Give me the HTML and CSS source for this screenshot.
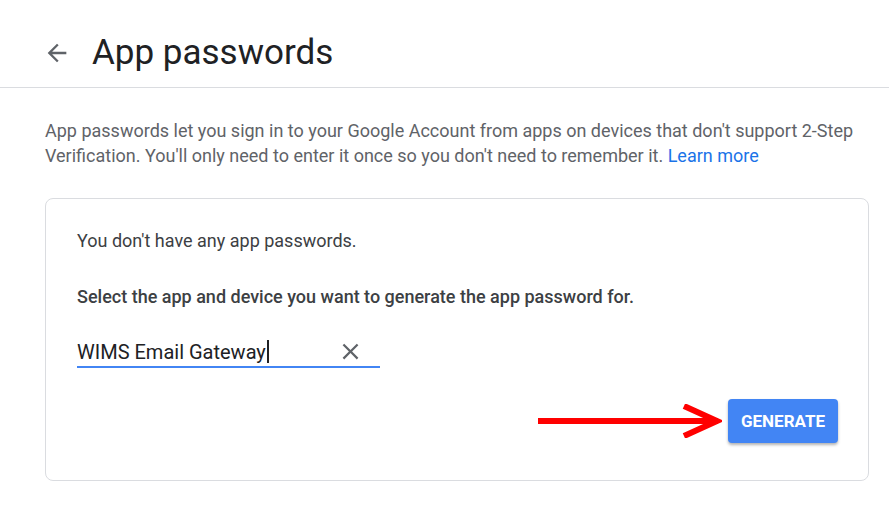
FILE: index.html
```html
<!DOCTYPE html>
<html>
<head>
    <title>App passwords</title>
    <link rel="stylesheet" href="styles.css">
</head>
<body>
    <!-- Page header -->
    <header class="page-header">
        <a class="back-link" href="#">
            <svg viewBox="0 0 24 24" width="28" height="28"><path d="M20 11H7.83l5.59-5.59L12 4l-8 8 8 8 1.41-1.41L7.83 13H20v-2z"/></svg>
        </a>
        <h1 class="page-title">App passwords</h1>
    </header>

    <main class="content">
        <p class="intro">
            <span>App passwords let you sign in to your Google Account from apps on devices that don't support 2-Step
            Verification. You'll only need to enter it once so you don't need to remember it.</span>
            <a class="learn-more" href="#">Learn more</a>
        </p>

        <!-- Generate card -->
        <section class="card">
            <p class="empty-note">You don't have any app passwords.</p>
            <p class="select-label">Select the app and device you want to generate the app password for.</p>

            <div class="field">
                <span class="field-value">WIMS Email Gateway<span class="caret"></span></span>
                <svg class="clear-icon" viewBox="0 0 24 24" width="27" height="27"><path d="M19 6.41L17.59 5 12 10.59 6.41 5 5 6.41 10.59 12 5 17.59 6.41 19 12 13.41 17.59 19 19 17.59 13.41 12z"/></svg>
            </div>

            <div class="actions">
                <svg class="pointer-arrow" viewBox="0 0 184 34" width="184" height="34">
                    <line x1="0" y1="17" x2="178" y2="17" stroke="#ff0000" stroke-width="6"/>
                    <polyline points="146,2 179,17 146,32" fill="none" stroke="#ff0000" stroke-width="6"/>
                </svg>
                <button class="generate-btn">GENERATE</button>
            </div>
        </section>
    </main>
</body>
</html>
```

FILE: styles.css
```css
body {
    font-family: Roboto, Arial, sans-serif;
    background-color: #fff;
    margin: 0;
    color: #3c4043;
}

.page-header {
    display: flex;
    align-items: center;
    height: 69px;
    padding-top: 18px;
    border-bottom: 1px solid #dadce0;
    padding-left: 43px;
    box-sizing: content-box;
}

.back-link {
    display: flex;
    fill: #5f6368;
    margin-right: 21px;
}

.page-title {
    margin: 0;
    font-size: 35px;
    font-weight: 400;
    color: #202124;
}

.content {
    width: 824px;
    margin-left: 45px;
    padding-top: 30px;
}

.intro {
    margin: 0 0 30px 0;
    font-size: 18px;
    line-height: 25px;
    color: #5f6368;
}

.learn-more {
    color: #1a73e8;
    text-decoration: none;
}

.card {
    border: 1px solid #dadce0;
    border-radius: 8px;
    padding: 30px 30px 37px 31px;
}

.empty-note {
    margin: 0 0 32px 0;
    font-size: 18px;
    line-height: 24px;
}

.select-label {
    margin: 0 0 29px 0;
    font-size: 18px;
    line-height: 24px;
    font-weight: 500;
}

.field {
    display: flex;
    align-items: center;
    justify-content: space-between;
    width: 303px;
    border-bottom: 2px solid #4285f4;
    padding-bottom: 1px;
}

.field-value {
    font-size: 20px;
    color: #202124;
    display: flex;
    align-items: center;
}

.caret {
    display: inline-block;
    width: 2px;
    height: 23px;
    background-color: #202124;
    margin-left: 1px;
}

.clear-icon {
    fill: #5f6368;
    margin-right: 16px;
}

.actions {
    display: flex;
    justify-content: flex-end;
    align-items: center;
    gap: 6px;
    margin-top: 31px;
}

.generate-btn {
    width: 110px;
    height: 44px;
    background-color: #4285f4;
    color: #fff;
    border: none;
    border-radius: 4px;
    font-family: Roboto, Arial, sans-serif;
    font-size: 17px;
    font-weight: 700;
    box-shadow: 0 2px 3px rgba(0, 0, 0, 0.3);
    cursor: pointer;
}
```
